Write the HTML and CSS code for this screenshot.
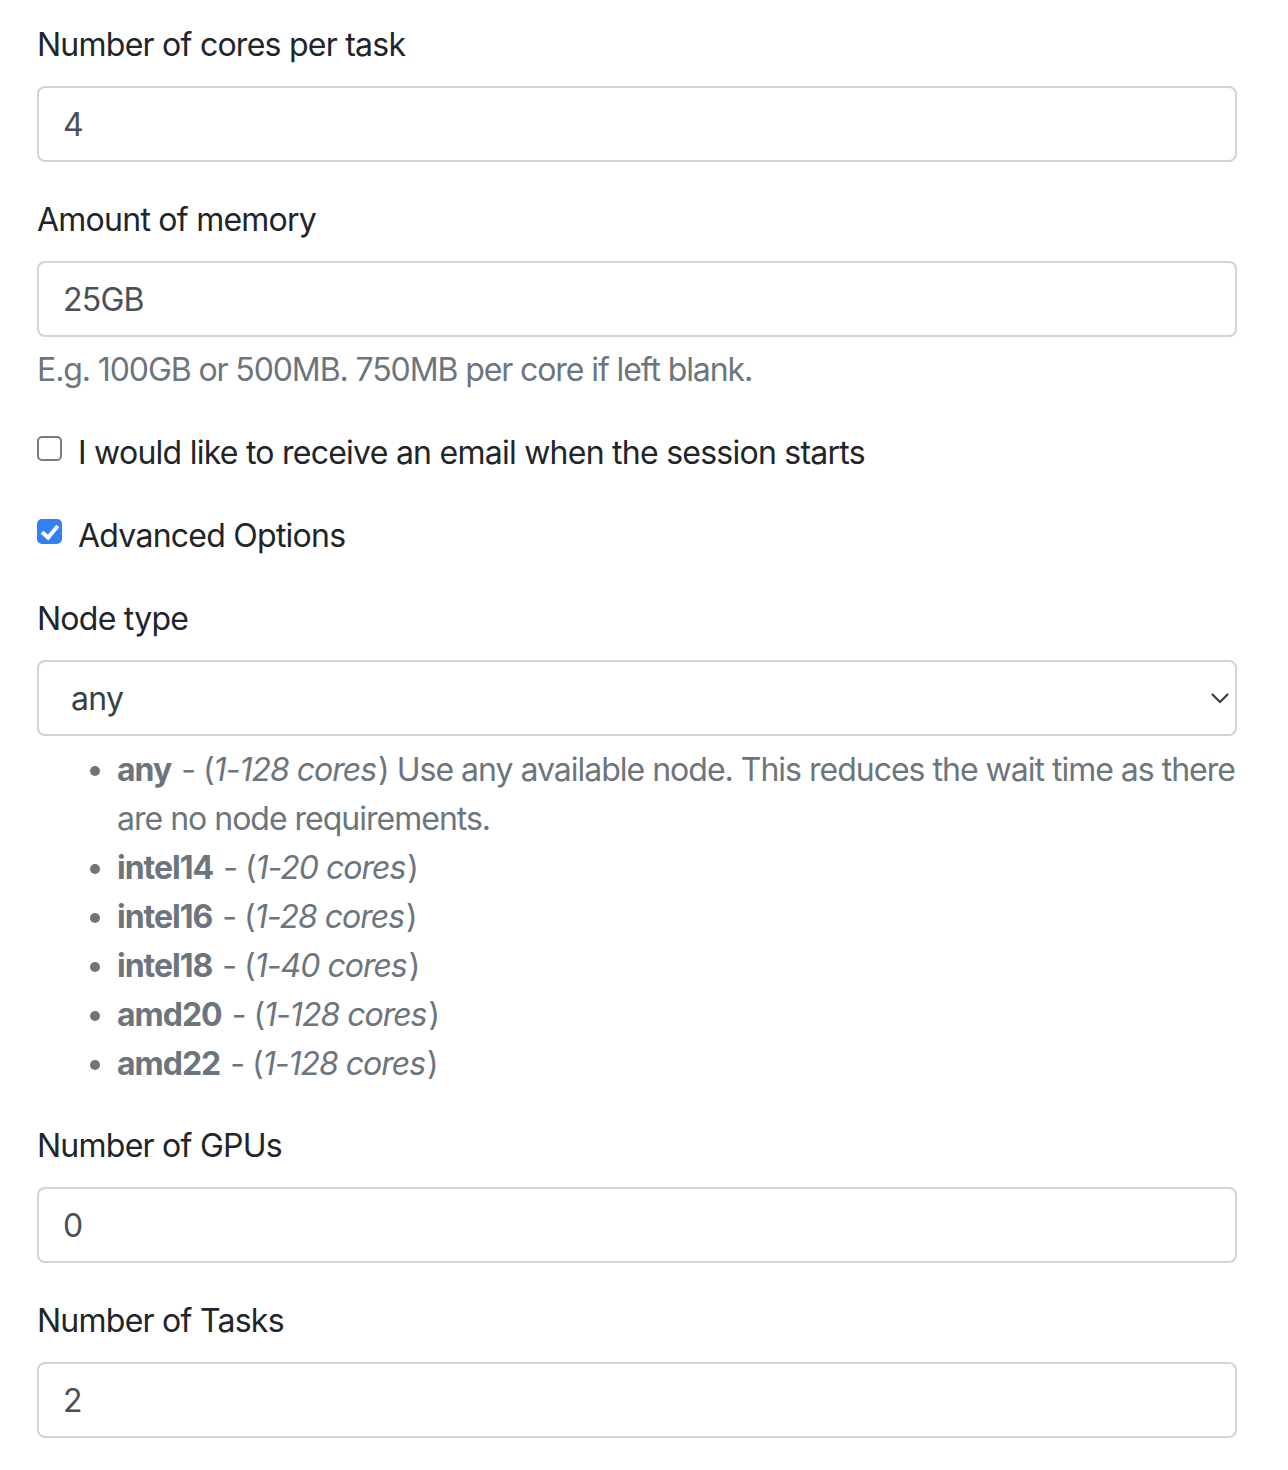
FILE: index.html
```html
<!DOCTYPE html>
<html lang="en">
<head>
<meta charset="utf-8">
<title>Session options</title>
<link rel="stylesheet" href="styles.css">
</head>
<body>
<form class="form">
  <div class="group">
    <label class="label" for="cores">Number of cores per task</label>
    <input class="control" id="cores" type="text" value="4">
  </div>

  <div class="group group-help">
    <label class="label" for="mem">Amount of memory</label>
    <input class="control" id="mem" type="text" value="25GB">
    <div class="help">E.g. 100GB or 500MB. 750MB per core if left blank.</div>
  </div>

  <div class="group group-check">
    <label class="check">
      <input class="check-input" type="checkbox">
      <span class="check-label">I would like to receive an email when the session starts</span>
    </label>
  </div>

  <div class="group group-check">
    <label class="check">
      <input class="check-input" type="checkbox" checked>
      <span class="check-label">Advanced Options</span>
    </label>
  </div>

  <div class="group">
    <label class="label" for="node">Node type</label>
    <div class="select-wrap">
      <select class="control select" id="node">
        <option>any</option>
        <option>intel14</option>
        <option>intel16</option>
        <option>intel18</option>
        <option>amd20</option>
        <option>amd22</option>
      </select>
      <svg class="chevron" width="18" height="11" viewBox="0 0 18 11" aria-hidden="true">
        <path d="M1.5 1.5 L9 9 L16.5 1.5" fill="none" stroke="#3a3f44" stroke-width="2.2" stroke-linecap="round" stroke-linejoin="round"/>
      </svg>
    </div>
    <ul class="node-list">
      <li><span class="item"><strong>any</strong> - (<em>1-128 cores</em>) Use any available node. This reduces the wait time as there are no node requirements.</span></li>
      <li><span class="item"><strong>intel14</strong> - (<em>1-20 cores</em>)</span></li>
      <li><span class="item"><strong>intel16</strong> - (<em>1-28 cores</em>)</span></li>
      <li><span class="item"><strong>intel18</strong> - (<em>1-40 cores</em>)</span></li>
      <li><span class="item"><strong>amd20</strong> - (<em>1-128 cores</em>)</span></li>
      <li><span class="item"><strong>amd22</strong> - (<em>1-128 cores</em>)</span></li>
    </ul>
  </div>

  <div class="group">
    <label class="label" for="gpus">Number of GPUs</label>
    <input class="control" id="gpus" type="text" value="0">
  </div>

  <div class="group">
    <label class="label" for="tasks">Number of Tasks</label>
    <input class="control" id="tasks" type="text" value="2">
  </div>
</form>
</body>
</html>
```

FILE: styles.css
```css
html, body {
  margin: 0;
  padding: 0;
  background: #ffffff;
}

body {
  font-family: Inter, "Liberation Sans", Arial, sans-serif;
  font-size: 32px;
  line-height: 48px;
  color: #212529;
  letter-spacing: -0.75px;
}

.form {
  width: 1200px;
  padding: 21px 0 0 37px;
  display: flex;
  flex-direction: column;
}

.group {
  display: flex;
  flex-direction: column;
  margin-bottom: 34px;
}

.group-help,
.group-check {
  margin-bottom: 35px;
}

.label {
  display: block;
  margin-bottom: 17px;
}

.control {
  box-sizing: border-box;
  width: 1200px;
  height: 76px;
  margin: 0;
  padding: 0 24px;
  border: 2px solid #ced4da;
  border-radius: 8px;
  background: #ffffff;
  font-family: inherit;
  font-size: 32px;
  letter-spacing: -0.75px;
  color: #495057;
  outline: none;
}

.help {
  margin-top: 9px;
  color: #6c757d;
  letter-spacing: -1.1px;
}

.check {
  display: flex;
  align-items: flex-start;
  cursor: pointer;
}

.check-input {
  appearance: none;
  -webkit-appearance: none;
  box-sizing: border-box;
  width: 25px;
  height: 25px;
  margin: 7px 16px 0 0;
  flex: none;
  border: 2px solid #7a7a7a;
  border-radius: 5px;
  background: #ffffff;
  position: relative;
}

.check-input:checked {
  border-color: #3080f7;
  background: #3080f7;
}

.check-input:checked::after {
  content: "";
  position: absolute;
  left: 6px;
  top: 1px;
  width: 6px;
  height: 13px;
  border: solid #ffffff;
  border-width: 0 4px 4px 0;
  transform: rotate(40deg);
}

.select-wrap {
  position: relative;
  width: 1200px;
}

.select {
  appearance: none;
  -webkit-appearance: none;
  padding-left: 32px;
  color: #3a3f44;
  display: block;
}

.chevron {
  position: absolute;
  right: 8px;
  top: 33px;
  pointer-events: none;
}

.node-list {
  margin: 9px 0 0 0;
  padding: 0 0 0 80px;
  color: #6c757d;
  line-height: 49px;
  letter-spacing: -1px;
}

.node-list strong {
  font-weight: 700;
  margin-right: 2px;
}

.node-list em {
  font-style: italic;
  margin-right: 2px;
}
```
